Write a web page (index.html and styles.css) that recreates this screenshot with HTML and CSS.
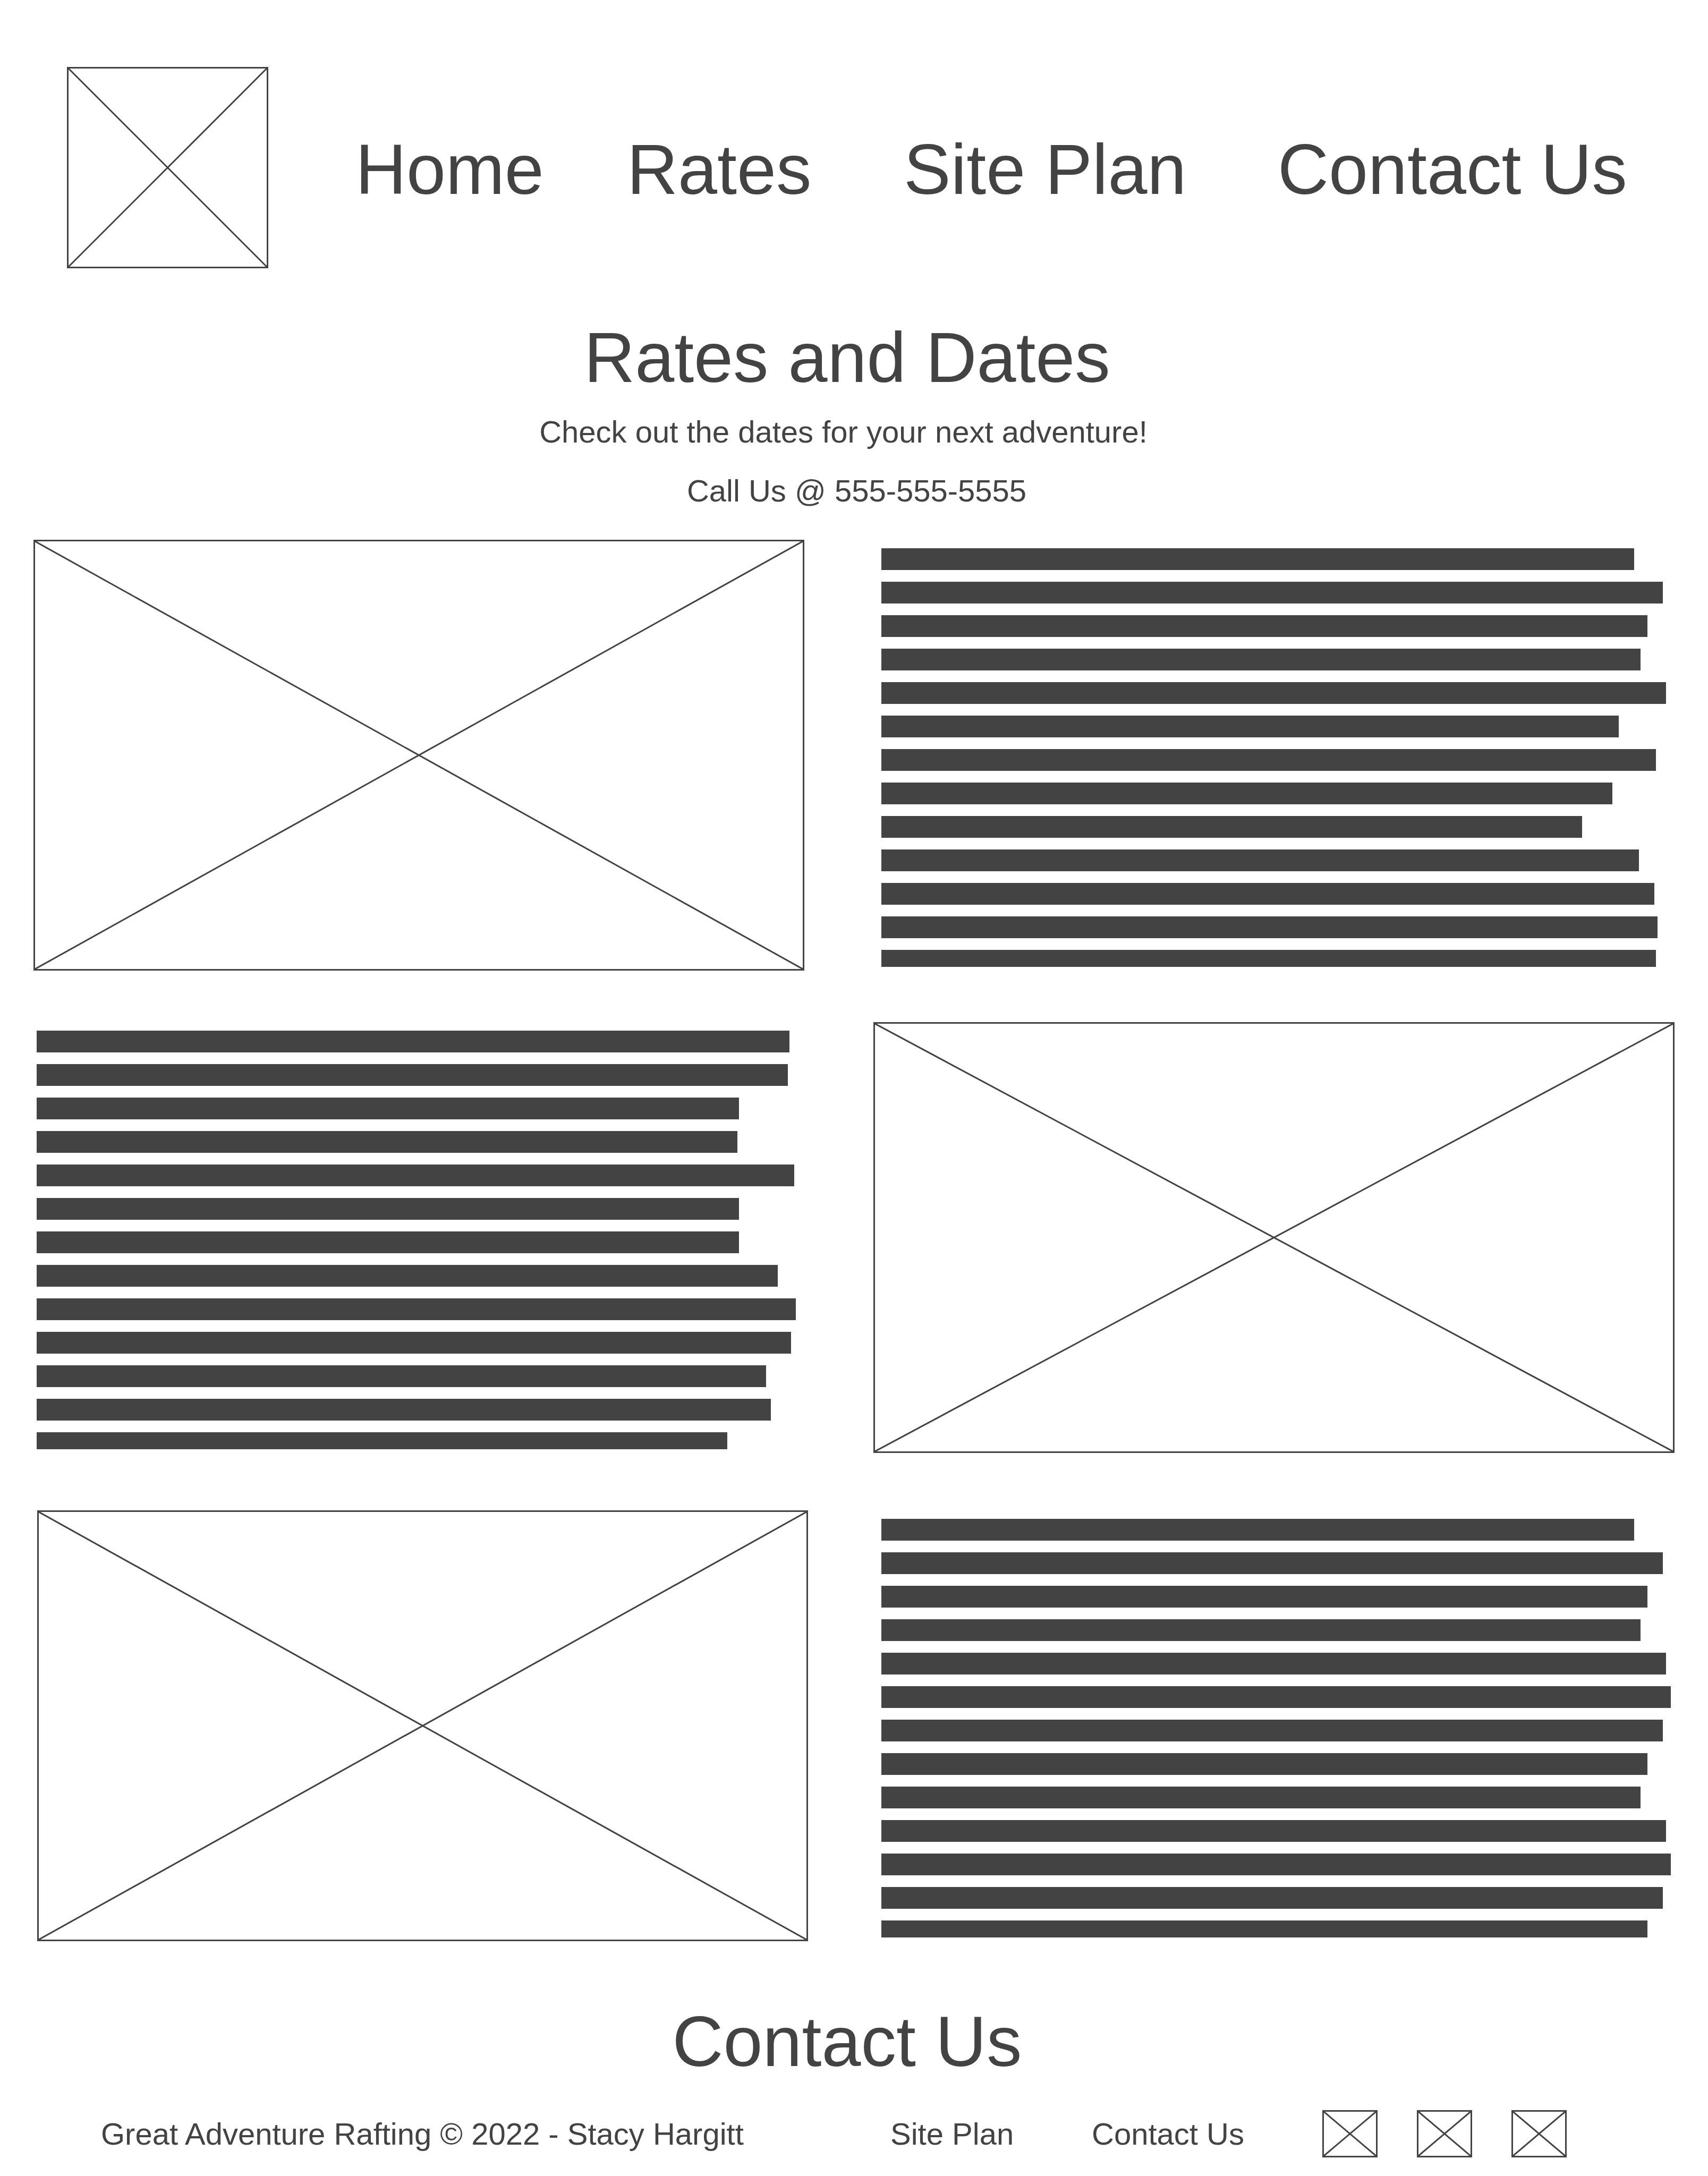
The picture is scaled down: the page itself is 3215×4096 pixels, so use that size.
FILE: index.html
```html
<!DOCTYPE html>
<html lang="en">
<head>
<meta charset="utf-8">
<meta name="viewport" content="width=device-width, initial-scale=1">
<title>Rates and Dates</title>
<link rel="stylesheet" href="styles.css">
</head>
<body>
<header class="site-header">
  <svg class="placeholder logo" role="img" aria-label="Logo"><line x1="0" y1="0" x2="100%" y2="100%"/><line x1="100%" y1="0" x2="0" y2="100%"/></svg>
  <nav class="main-nav">
    <a href="#home">Home</a>
    <a href="#rates">Rates</a>
    <a href="#site-plan">Site Plan</a>
    <a href="#contact">Contact Us</a>
  </nav>
</header>

<main>
  <section class="intro" id="rates">
    <h1 class="title">Rates and Dates</h1>
    <p class="tagline">Check out the dates for your next adventure!</p>
    <p class="phone">Call Us @ 555-555-5555</p>
  </section>

  <section class="feature">
    <svg class="placeholder" role="img" aria-label="Photo"><line x1="0" y1="0" x2="100%" y2="100%"/><line x1="100%" y1="0" x2="0" y2="100%"/></svg>
    <div class="copy">
      <div class="line" style="width:94.97%"></div>
      <div class="line" style="width:98.56%"></div>
      <div class="line" style="width:96.65%"></div>
      <div class="line" style="width:95.78%"></div>
      <div class="line" style="width:98.99%"></div>
      <div class="line" style="width:93.03%"></div>
      <div class="line" style="width:97.72%"></div>
      <div class="line" style="width:92.23%"></div>
      <div class="line" style="width:88.4%"></div>
      <div class="line" style="width:95.58%"></div>
      <div class="line" style="width:97.49%"></div>
      <div class="line" style="width:97.92%"></div>
      <div class="line" style="width:97.72%"></div>
    </div>
  </section>

  <section class="feature feature-reverse">
    <div class="copy">
      <div class="line" style="width:99.06%"></div>
      <div class="line" style="width:98.86%"></div>
      <div class="line" style="width:92.45%"></div>
      <div class="line" style="width:92.24%"></div>
      <div class="line" style="width:99.72%"></div>
      <div class="line" style="width:92.45%"></div>
      <div class="line" style="width:92.45%"></div>
      <div class="line" style="width:97.53%"></div>
      <div class="line" style="width:99.95%"></div>
      <div class="line" style="width:99.29%"></div>
      <div class="line" style="width:95.98%"></div>
      <div class="line" style="width:96.64%"></div>
      <div class="line" style="width:90.91%"></div>
    </div>
    <svg class="placeholder" role="img" aria-label="Photo"><line x1="0" y1="0" x2="100%" y2="100%"/><line x1="100%" y1="0" x2="0" y2="100%"/></svg>
  </section>

  <section class="feature feature-last">
    <svg class="placeholder" role="img" aria-label="Photo"><line x1="0" y1="0" x2="100%" y2="100%"/><line x1="100%" y1="0" x2="0" y2="100%"/></svg>
    <div class="copy">
      <div class="line" style="width:94.97%"></div>
      <div class="line" style="width:98.56%"></div>
      <div class="line" style="width:96.65%"></div>
      <div class="line" style="width:95.78%"></div>
      <div class="line" style="width:98.99%"></div>
      <div class="line" style="width:99.62%"></div>
      <div class="line" style="width:98.56%"></div>
      <div class="line" style="width:96.65%"></div>
      <div class="line" style="width:95.78%"></div>
      <div class="line" style="width:98.99%"></div>
      <div class="line" style="width:99.62%"></div>
      <div class="line" style="width:98.56%"></div>
      <div class="line" style="width:96.65%"></div>
    </div>
  </section>
</main>

<footer class="site-footer" id="contact">
  <h2 class="title">Contact Us</h2>
  <div class="footer-bar">
    <span>Great Adventure Rafting © 2022 - Stacy Hargitt</span>
    <a href="#site-plan">Site Plan</a>
    <a href="#contact">Contact Us</a>
    <div class="social">
      <a href="#social-1" aria-label="Social link 1"><svg class="placeholder"><line x1="0" y1="0" x2="100%" y2="100%"/><line x1="100%" y1="0" x2="0" y2="100%"/></svg></a>
      <a href="#social-2" aria-label="Social link 2"><svg class="placeholder"><line x1="0" y1="0" x2="100%" y2="100%"/><line x1="100%" y1="0" x2="0" y2="100%"/></svg></a>
      <a href="#social-3" aria-label="Social link 3"><svg class="placeholder"><line x1="0" y1="0" x2="100%" y2="100%"/><line x1="100%" y1="0" x2="0" y2="100%"/></svg></a>
    </div>
  </div>
</footer>
</body>
</html>
```
FILE: styles.css
```css
* {
  box-sizing: border-box;
}

body {
  margin: 0;
  background: #fff;
  color: #434343;
  font-family: "Liberation Sans", Arial, sans-serif;
  font-size: 58px;
  line-height: 111px;
}

a {
  color: inherit;
  text-decoration: none;
}

h1,
h2,
p {
  margin: 0;
}

/* Crossed box standing in for a picture */
.placeholder {
  display: block;
  width: 100%;
  height: 100%;
  border: 3px solid #434343;
}

.placeholder line {
  stroke: #434343;
  stroke-width: 3px;
}

/* Header */
.site-header {
  display: flex;
  align-items: center;
  gap: 164px;
  padding: 126px 0 93px 126px;
}

.logo {
  flex: none;
  width: 379px;
  height: 379px;
}

.main-nav {
  flex: 1;
  display: grid;
  grid-template-columns: 511fr 521fr 704fr 810fr;
  padding-top: 6px;
  font-size: 133px;
  line-height: 150px;
  white-space: nowrap;
}

/* Intro */
.intro {
  padding-bottom: 37px;
  text-align: center;
}

.title {
  padding-right: 26px;
  font-size: 133px;
  font-weight: 400;
  line-height: 150px;
  text-align: center;
}

.tagline {
  margin-top: 9px;
  padding-right: 40px;
}

.phone {
  padding-left: 10px;
}

/* Picture and copy rows */
.feature {
  display: grid;
  grid-template-columns: 1451fr 1492fr;
  column-gap: 145px;
  padding: 0 64px 0 63px;
}

.feature-reverse {
  grid-template-columns: 1430fr 1508fr;
  margin: 97px 0 108px;
  padding: 0 63px 0 69px;
}

.feature-last {
  column-gap: 138px;
  padding-left: 70px;
}

.copy {
  display: flex;
  flex-direction: column;
  gap: 22px;
  padding: 16px 0 7px;
}

.line {
  height: 41px;
  background: #434343;
}

.line:last-child {
  height: 32px;
}

/* Footer */
.site-footer {
  padding: 114px 0 34px;
}

.footer-bar {
  display: grid;
  grid-template-columns: 1486fr 379fr 434fr 726fr;
  align-items: center;
  margin-top: 54px;
  padding-left: 190px;
  line-height: 89px;
  white-space: nowrap;
}

.social {
  display: flex;
  gap: 74px;
}

.social a {
  width: 104px;
  height: 89px;
}
```
